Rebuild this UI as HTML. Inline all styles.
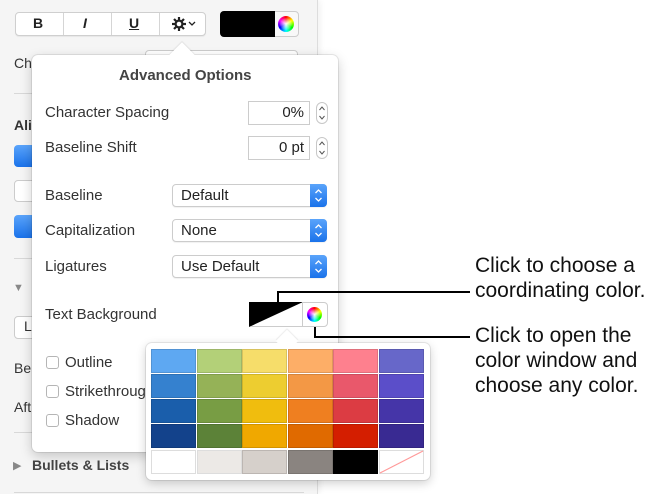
<!DOCTYPE html>
<html><head><meta charset="utf-8"><style>
*{margin:0;padding:0;box-sizing:border-box}
body{width:650px;height:494px;position:relative;overflow:hidden;background:#fff;font-family:"Liberation Sans",Helvetica,Arial,sans-serif;color:#333}
.a{position:absolute}
.side{left:0;top:0;width:318px;height:494px;background:#f5f5f5;border-right:1px solid #ddd;box-shadow:2px 0 6px rgba(0,0,0,.06)}
.t{position:absolute;font-size:14px;white-space:nowrap}
.p{font-size:15px}
.hl{position:absolute;height:1px;background:#d8d8d8}
.pop{left:32px;top:55px;width:306px;height:397px;background:#fff;border-radius:6px;box-shadow:0 0 0 1px rgba(0,0,0,.08),0 4px 12px rgba(0,0,0,.2)}
.fld{position:absolute;background:#fff;border:1px solid #ccc;font-size:15px;text-align:right;padding-right:5px;line-height:22px;color:#222}
.step{position:absolute;width:12px;height:22px;border:1px solid #c8c8c8;border-radius:6px;background:#fff}
.pu{position:absolute;left:172px;width:155px;height:23px;border:1px solid #ccc;border-radius:4px;background:#fff;font-size:15px;line-height:22px;padding-left:8px;color:#222;box-shadow:0 1px 1px rgba(0,0,0,.06)}
.pu b{position:absolute;right:-1px;top:-1px;width:17px;height:23px;background:linear-gradient(#5aa4fb,#1a72ea);border-radius:0 4px 4px 0}
.cb{position:absolute;left:46px;width:13px;height:13px;border:1px solid #b5b5b5;border-radius:3px;background:#fff}
.ann{position:absolute;left:475px;font-size:21px;line-height:25px;color:#111;white-space:nowrap}
.ln{position:absolute;background:#000}
.pal{left:146px;top:343px;width:284px;height:137px;background:#fff;border-radius:6px;box-shadow:0 0 0 1px rgba(0,0,0,.08),0 3px 10px rgba(0,0,0,.2)}
.c{position:absolute;width:45px;height:24px;border:1px solid rgba(0,0,0,.12)}
</style></head><body>
<div class="a side"></div>
<div class="a" style="left:15px;top:12px;width:191px;height:24px;background:#fff;border:1px solid #cfcfcf;border-radius:4px;box-shadow:0 1px 1px rgba(0,0,0,.06)"></div>
<div class="a" style="left:63px;top:13px;width:1px;height:22px;background:#d5d5d5"></div>
<div class="a" style="left:111px;top:13px;width:1px;height:22px;background:#d5d5d5"></div>
<div class="a" style="left:159px;top:13px;width:1px;height:22px;background:#d5d5d5"></div>
<div class="t" style="left:33px;top:15px;font-weight:bold;color:#222">B</div>
<div class="t" style="left:83px;top:15px;font-weight:bold;font-style:italic;color:#222">I</div>
<div class="t" style="left:129px;top:15px;font-weight:bold;text-decoration:underline;color:#222">U</div>
<svg class="a" style="left:171px;top:16px" width="28" height="16" viewBox="0 0 28 16"><g stroke="#222" stroke-width="2.2"><line x1="8" y1="1" x2="8" y2="15"/><line x1="1" y1="8" x2="15" y2="8"/><line x1="3" y1="3" x2="13" y2="13"/><line x1="13" y1="3" x2="3" y2="13"/></g><circle cx="8" cy="8" r="4.5" fill="#222"/><circle cx="8" cy="8" r="2.3" fill="#fff"/><path d="M18 6l3 3 3-3" fill="none" stroke="#222" stroke-width="1.3"/></svg>
<div class="a" style="left:220px;top:11px;width:79px;height:26px;border:1px solid #ccc;border-radius:4px;background:#f8f8f8"></div>
<div class="a" style="left:220px;top:11px;width:55px;height:26px;background:#000;border-radius:4px 0 0 4px"></div>
<div class="a" style="left:278px;top:16px;width:16px;height:16px;border-radius:50%;background:conic-gradient(red,#ff0,#0f0,#0ff,#00f,#f0f,red)"></div>
<div class="a" style="left:280px;top:18px;width:12px;height:12px;border-radius:50%;background:radial-gradient(#fff,rgba(255,255,255,0) 80%)"></div>
<div class="t" style="left:14px;top:55px">Ch</div>
<div class="a" style="left:145px;top:50px;width:153px;height:22px;border:1px solid #ccc;border-radius:4px;background:#fff"></div>
<div class="hl" style="left:14px;top:93px;width:290px"></div>
<div class="t" style="left:14px;top:117px;font-weight:bold">Ali</div>
<div class="a" style="left:14px;top:145px;width:30px;height:22px;border-radius:4px;background:linear-gradient(#5aa4fb,#1a72ea)"></div>
<div class="a" style="left:14px;top:180px;width:30px;height:22px;border-radius:4px;background:#fff;border:1px solid #ccc"></div>
<div class="a" style="left:14px;top:215px;width:30px;height:23px;border-radius:4px;background:linear-gradient(#5aa4fb,#1a72ea)"></div>
<div class="hl" style="left:14px;top:258px;width:290px"></div>
<div class="t" style="left:13px;top:282px;color:#888;font-size:11px">▼</div>
<div class="a" style="left:14px;top:316px;width:30px;height:23px;border-radius:4px;background:#fff;border:1px solid #ccc"></div>
<div class="t" style="left:24px;top:318px">L</div>
<div class="t" style="left:14px;top:360px">Be</div>
<div class="t" style="left:14px;top:399px">Aft</div>
<div class="hl" style="left:14px;top:432px;width:290px"></div>
<div class="t" style="left:13px;top:459px;color:#888;font-size:11px">▶</div>
<div class="t" style="left:32px;top:457px;font-weight:bold;color:#444">Bullets &amp; Lists</div>
<div class="hl" style="left:14px;top:492px;width:290px"></div>
<div class="a pop"></div>
<div class="a" style="left:173px;top:46px;width:18px;height:18px;background:#fff;transform:rotate(45deg);box-shadow:-1px -1px 1px rgba(0,0,0,.08)"></div>
<div class="a" style="left:165px;top:56px;width:34px;height:12px;background:#fff"></div>
<div class="t p" style="left:119px;top:67px;font-weight:bold;color:#444">Advanced Options</div>
<div class="t p" style="left:45px;top:104px">Character Spacing</div>
<div class="fld" style="left:248px;top:101px;width:62px;height:24px">0%</div>
<div class="step" style="left:316px;top:102px"><svg width="10" height="20"><path d="M2.5 7l2.5-3 2.5 3M2.5 13l2.5 3 2.5-3" fill="none" stroke="#555" stroke-width="1"/></svg></div>
<div class="t p" style="left:45px;top:139px">Baseline Shift</div>
<div class="fld" style="left:248px;top:136px;width:62px;height:24px">0 pt</div>
<div class="step" style="left:316px;top:137px"><svg width="10" height="20"><path d="M2.5 7l2.5-3 2.5 3M2.5 13l2.5 3 2.5-3" fill="none" stroke="#555" stroke-width="1"/></svg></div>
<div class="t p" style="left:45px;top:187px">Baseline</div>
<div class="pu" style="top:184px">Default<b><svg width="17" height="23"><path d="M5.5 9l3-3 3 3M5.5 14l3 3 3-3" fill="none" stroke="#fff" stroke-width="1.3"/></svg></b></div>
<div class="t p" style="left:45px;top:222px">Capitalization</div>
<div class="pu" style="top:219px">None<b><svg width="17" height="23"><path d="M5.5 9l3-3 3 3M5.5 14l3 3 3-3" fill="none" stroke="#fff" stroke-width="1.3"/></svg></b></div>
<div class="t p" style="left:45px;top:258px">Ligatures</div>
<div class="pu" style="top:255px">Use Default<b><svg width="17" height="23"><path d="M5.5 9l3-3 3 3M5.5 14l3 3 3-3" fill="none" stroke="#fff" stroke-width="1.3"/></svg></b></div>
<div class="t p" style="left:45px;top:306px">Text Background</div>
<div class="a" style="left:249px;top:302px;width:79px;height:25px;border:1px solid #ccc;border-radius:4px;background:#fff;overflow:hidden"></div>
<svg class="a" style="left:249px;top:302px" width="54" height="25"><polygon points="0,0 54,0 0,25" fill="#000"/></svg>
<div class="a" style="left:302px;top:302px;width:1px;height:25px;background:#ccc"></div>
<div class="a" style="left:307px;top:307px;width:15px;height:15px;border-radius:50%;background:conic-gradient(red,#ff0,#0f0,#0ff,#00f,#f0f,red)"></div>
<div class="a" style="left:309px;top:309px;width:11px;height:11px;border-radius:50%;background:radial-gradient(#fff,rgba(255,255,255,0) 80%)"></div>
<div class="cb" style="top:356px"></div><div class="t p" style="left:65px;top:354px">Outline</div>
<div class="cb" style="top:385px"></div><div class="t p" style="left:65px;top:383px">Strikethrough</div>
<div class="cb" style="top:414px"></div><div class="t p" style="left:65px;top:412px">Shadow</div>
<div class="a pal"></div>
<div class="a" style="left:279px;top:333px;width:16px;height:16px;background:#fff;transform:rotate(45deg);box-shadow:-1px -1px 1px rgba(0,0,0,.08)"></div>
<div class="a" style="left:272px;top:344px;width:30px;height:8px;background:#fff"></div>
<div class="a" style="left:151px;top:349px;width:274px;height:126px">
<div class="c" style="left:0;top:0;background:#5ea8f2"></div><div class="c" style="left:45.5px;top:0;background:#b3d078"></div><div class="c" style="left:91px;top:0;background:#f6dd6a"></div><div class="c" style="left:136.5px;top:0;background:#fdae67"></div><div class="c" style="left:182px;top:0;background:#fe808e"></div><div class="c" style="left:227.5px;top:0;background:#6767c9"></div>
<div class="c" style="left:0;top:25px;background:#3581cf"></div><div class="c" style="left:45.5px;top:25px;background:#95b257"></div><div class="c" style="left:91px;top:25px;background:#edcd30"></div><div class="c" style="left:136.5px;top:25px;background:#f39845"></div><div class="c" style="left:182px;top:25px;background:#e9586b"></div><div class="c" style="left:227.5px;top:25px;background:#5b4ec9"></div>
<div class="c" style="left:0;top:50px;background:#1a5eab"></div><div class="c" style="left:45.5px;top:50px;background:#789d44"></div><div class="c" style="left:91px;top:50px;background:#f0bd0e"></div><div class="c" style="left:136.5px;top:50px;background:#ef7f20"></div><div class="c" style="left:182px;top:50px;background:#dc3c43"></div><div class="c" style="left:227.5px;top:50px;background:#4535a8"></div>
<div class="c" style="left:0;top:75px;background:#13428b"></div><div class="c" style="left:45.5px;top:75px;background:#5c8238"></div><div class="c" style="left:91px;top:75px;background:#f0a800"></div><div class="c" style="left:136.5px;top:75px;background:#e06a00"></div><div class="c" style="left:182px;top:75px;background:#d41e00"></div><div class="c" style="left:227.5px;top:75px;background:#392a92"></div>
<div class="c" style="left:0;top:101px;background:#fff;border-color:#ddd"></div><div class="c" style="left:45.5px;top:101px;background:#ece9e6;border-color:#ddd"></div><div class="c" style="left:91px;top:101px;background:#d6d0cb"></div><div class="c" style="left:136.5px;top:101px;background:#8a8480"></div><div class="c" style="left:182px;top:101px;background:#000"></div>
<svg class="a" style="left:227.5px;top:101px" width="45" height="24"><rect x=".5" y=".5" width="44" height="23" fill="#fff" stroke="#ddd"/><line x1="1" y1="23" x2="44" y2="1" stroke="#f99" stroke-width="1.2"/></svg>
</div>
<div class="ln" style="left:277px;top:291px;width:2px;height:12px"></div>
<div class="ln" style="left:277px;top:291px;width:193px;height:2px"></div>
<div class="ln" style="left:314px;top:327px;width:2px;height:10px"></div>
<div class="ln" style="left:314px;top:336px;width:156px;height:2px"></div>
<div class="ann" style="top:253px">Click to choose a<br>coordinating color.</div>
<div class="ann" style="top:323px">Click to open the<br>color window and<br>choose any color.</div>
</body></html>
